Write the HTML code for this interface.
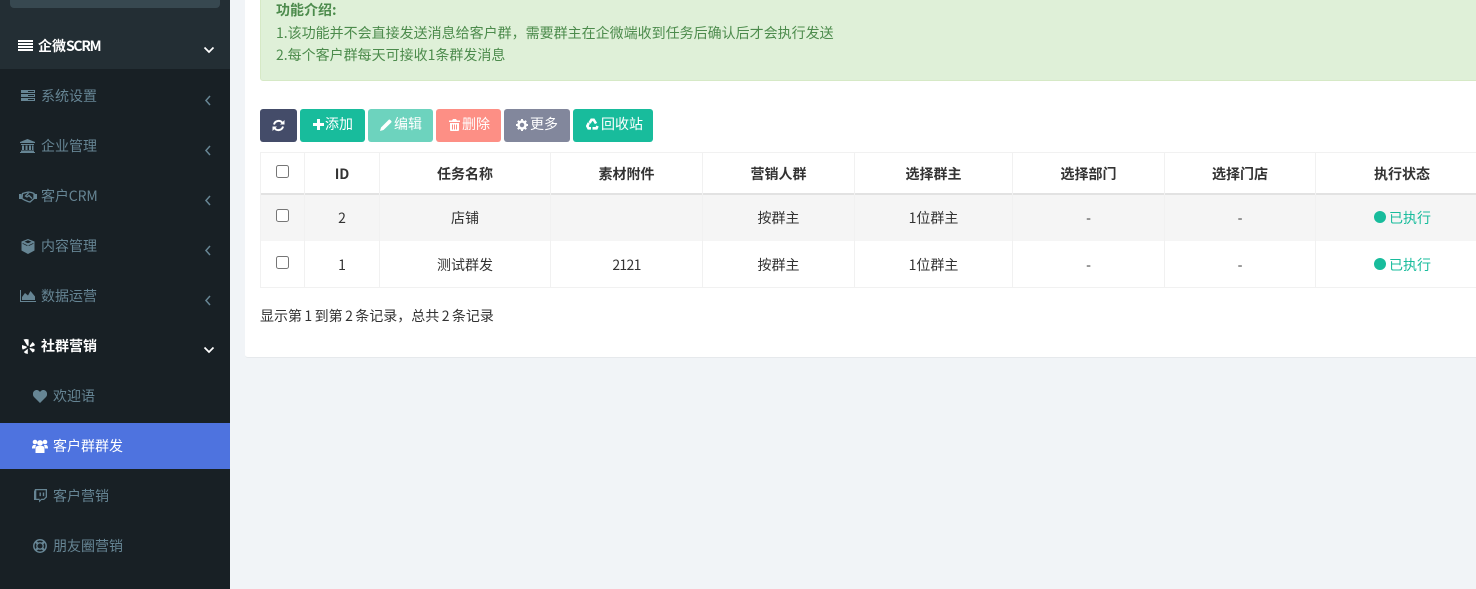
<!DOCTYPE html>
<html lang="zh-CN"><head><meta charset="utf-8"><title>客户群群发</title>
<style>
*{box-sizing:border-box}
html,body{margin:0;padding:0;width:1476px;height:589px;overflow:hidden;background:#f1f4f7;font-family:"Noto Sans CJK SC","Liberation Sans",sans-serif;font-size:14px;color:#333}
.a{position:absolute;white-space:nowrap}
#side{position:absolute;left:0;top:0;width:230px;height:589px;background:#182025}
#top{position:absolute;left:0;top:0;width:230px;height:69px;background:#232e34}
#search{position:absolute;left:10px;top:-10px;width:210px;height:18px;background:#374850;border-radius:4px}
.m{position:absolute;left:41px;font-size:14px;line-height:20px;color:#668594;white-space:nowrap}
.m.s{left:53px}
.m.w{color:#fff}
svg{position:absolute;display:block}
.chev{fill:none;stroke:#668594;stroke-width:1.5}
.chev.w{stroke:#fff;stroke-width:1.7}
#panel{position:absolute;left:245px;top:0;width:1231px;height:358px;background:#fff;border-bottom:1px solid #e6e9ec;border-bottom-left-radius:3px}
#alert{position:absolute;left:260px;top:-10px;width:1240px;height:91px;background:#dff0d8;border:1px solid #d6e9c6;border-radius:3px}
.al{position:absolute;left:276px;font-size:14px;line-height:20px;color:#4c8b4c;white-space:nowrap}
.b{position:absolute;top:109px;height:33px;border-radius:3px;color:#fff;font-size:14px;line-height:31px;white-space:nowrap}
.b span{position:absolute;top:0}
.hl{position:absolute;background:#f2f2f2}
.t{position:absolute;text-align:center;line-height:20px;white-space:nowrap;font-size:14px;color:#333}
.t.h{font-weight:700;top:164px}
.cb{position:absolute;left:276px;width:13px;height:13px;border:1px solid #767676;border-radius:2.5px;background:#fff}
</style></head><body>
<div id="side">
<div id="top"></div>
<div id="search"></div>

<svg style="left:18px;top:40px" width="15" height="11" viewBox="0 0 15 11"><path fill="#fff" d="M0 0h15v2H0zM0 3h15v2H0zM0 6h15v2H0zM0 9h15v2H0z"/></svg>
<div class="m w" style="left:38px;top:36px;font-weight:700">企微<span style="letter-spacing:-1.3px">SCRM</span></div>
<svg style="left:203px;top:46px" width="12" height="9"><path class="chev w" d="M1.500 1.500L6 6l4.500-4.500"/></svg>

<svg style="left:21px;top:90px" width="14" height="11" viewBox="0 0 14 11"><path fill="#668594" d="M0 0h14v3H0zM0 4h14v3H0zM0 8h14v3H0z"/><path fill="#182025" d="M7 1h6v1H7zM7 5h6v1H7zM7 9h6v1H7z"/></svg>
<div class="m" style="top:86px">系统设置</div>
<svg style="left:204px;top:95px" width="8" height="11"><path class="chev" d="M6 1L2 5.500 6 10"/></svg>

<svg style="left:20px;top:139px" width="15" height="14" viewBox="0 0 15 14"><path fill="#668594" d="M7.500 0L15 3v1H0V3zM1 5h13v1H1zM2 6.500h2V11H2zM5.500 6.500h2V11h-2zM9 6.500h2V11H9zM12 6.500h1.500V11H12zM1 11.500h13V13H1zM0 13h15v1H0z"/></svg>
<div class="m" style="top:136px">企业管理</div>
<svg style="left:204px;top:145px" width="8" height="11"><path class="chev" d="M6 1L2 5.500 6 10"/></svg>

<svg style="left:19px;top:191px" width="18" height="12" viewBox="0 0 18 12"><path fill="none" stroke="#668594" stroke-width="1.300" d="M3.500 2.500L7 1.500 9.500 1l3 .5 2.500 1v5L11 11 9 10.500 5.500 9 3 7.500zM9.500 2L6.500 5 8 6 10 4.500 13 7.500"/><path fill="#668594" d="M0 3h2.500v5H0zM15.500 3H18v5h-2.500z"/></svg>
<div class="m" style="top:186px;letter-spacing:-.1px">客户CRM</div>
<svg style="left:204px;top:195px" width="8" height="11"><path class="chev" d="M6 1L2 5.500 6 10"/></svg>

<svg style="left:21px;top:239px" width="14" height="15" viewBox="0 0 14 15"><path fill="#668594" d="M7 0l6.500 2.500v9L7 15 .500 11.500v-9z"/><path fill="#182025" d="M7.600 6.300l4.800-2.300v.8L7.600 7.100zM6.400 6.300L1.600 4v.8l4.800 2.300zM7 1.300L10.500 2.700 7 4.200 3.500 2.700z"/></svg>
<div class="m" style="top:236px">内容管理</div>
<svg style="left:204px;top:245px" width="8" height="11"><path class="chev" d="M6 1L2 5.500 6 10"/></svg>

<svg style="left:20px;top:290px" width="16" height="12" viewBox="0 0 16 12"><path fill="#668594" d="M0 0h1v11h15v1H0zM2 10V7l3-4 3 2.500L10.500 1 15 6.500V10z"/></svg>
<div class="m" style="top:286px">数据运营</div>
<svg style="left:204px;top:295px" width="8" height="11"><path class="chev" d="M6 1L2 5.500 6 10"/></svg>

<svg style="left:22px;top:339px" width="13" height="15" viewBox="0 0 13 15"><path fill="#fff" d="M1.500 .5L4 0l2.600 .4v6.300H5.300zM0 6l4.600 1.500v1.400L.7 10.600 0 9zM7.700 6.800l3-3.800 2 2.300v1.200L8 8.200zM7.700 9l4.800 1v2.300l-1.800 1.200-3-3.400zM5.800 9.800V15l-2.700-.7-1.300-1.300z"/></svg>
<div class="m w" style="top:336px;font-weight:700">社群营销</div>
<svg style="left:203px;top:346px" width="12" height="9"><path class="chev w" d="M1.500 1.500L6 6l4.500-4.500"/></svg>

<svg style="left:33px;top:390px" width="14" height="13" viewBox="0 0 14 13"><path fill="#668594" d="M7 13L1 7C-1.500 4 .5 0 3.700 0 5.200 0 6.300 1 7 2 7.700 1 8.800 0 10.300 0 13.500 0 15.500 4 13 7z"/></svg>
<div class="m s" style="top:386px">欢迎语</div>

<div style="position:absolute;left:0;top:423px;width:230px;height:46px;background:#4e73df"></div>
<svg style="left:32px;top:439px" width="16" height="14" viewBox="0 0 16 14"><g fill="#fff"><circle cx="3" cy="3" r="2.300"/><circle cx="13" cy="3" r="2.300"/><circle cx="8" cy="4" r="2.900"/><path d="M0 9.500c0-2.500.8-3.500 2-3.500h2L3 9.500zM16 9.500c0-2.500-.8-3.500-2-3.500h-2l1 3.500zM3.500 14V9.500C3.500 8 4.500 7 6 7h4c1.500 0 2.500 1 2.500 2.500V14z"/></g></svg>
<div class="m s w" style="top:436px">客户群群发</div>

<svg style="left:34px;top:489px" width="13" height="14" viewBox="0 0 13 14"><path fill="#668594" fill-rule="evenodd" d="M1 0h12v8.200l-3 2.800H7.500L5 13.500V11H0V2.500zM2.300 1.300v8.400h3.400v1.600l1.600-1.600h2.400l2-1.900V1.300z"/><path fill="#668594" d="M5.500 3.500h1.400v3.600H5.500zM8.800 3.500h1.400v3.600H8.800z"/></svg>
<div class="m s" style="top:486px">客户营销</div>

<svg style="left:33px;top:539px" width="14" height="14" viewBox="0 0 14 14"><circle cx="7" cy="7" r="6.200" fill="none" stroke="#668594" stroke-width="1.500"/><circle cx="7" cy="7" r="3.200" fill="none" stroke="#668594" stroke-width="1.300"/><path stroke="#668594" stroke-width="2.200" d="M2.800 2.800l2 2M11.200 2.800l-2 2M2.800 11.200l2-2M11.200 11.200l-2-2"/></svg>
<div class="m s" style="top:536px">朋友圈营销</div>
</div>

<div id="panel"></div>
<div id="alert"></div>
<div class="al" style="top:0;font-weight:700">功能介绍:</div>
<div class="al" style="top:23px">1.该功能并不会直接发送消息给客户群，需要群主在企微端收到任务后确认后才会执行发送</div>
<div class="al" style="top:45px">2.每个客户群每天可接收1条群发消息</div>

<div class="b" style="left:260px;width:37px;background:#444c69"><svg style="left:12px;top:10px" width="13" height="13" viewBox="0 0 13 13"><path fill="none" stroke="#fff" stroke-width="2" d="M2 5.500A4.700 4.700 0 0 1 10.500 4M11 7.500A4.700 4.700 0 0 1 2.500 9"/><path fill="#fff" d="M12.500 1v4.500H8zM.5 12V7.500H5z"/></svg></div>
<div class="b" style="left:300px;width:65px;background:#18bc9c"><svg style="left:13px;top:10px" width="11" height="11" viewBox="0 0 11 11"><path fill="#fff" d="M4 0h3v4h4v3H7v4H4V7H0V4h4z"/></svg><span style="left:25px">添加</span></div>
<div class="b" style="left:368px;width:65px;background:#6dd3be"><svg style="left:12px;top:10px" width="12" height="12" viewBox="0 0 12 12"><path fill="#fff" d="M0 12l1-3.500L8.500 1c.6-.6 1.200-.6 1.800 0l.8.800c.6.600.6 1.200 0 1.800L3.500 11z"/></svg><span style="left:26px">编辑</span></div>
<div class="b" style="left:436px;width:65px;background:#fd8f85"><svg style="left:13px;top:10px" width="11" height="12" viewBox="0 0 11 12"><path fill="#fff" fill-rule="evenodd" d="M4 0h3l1 1.500h3V3H0V1.500h3zM1 4h9v7c0 .6-.4 1-1 1H2c-.6 0-1-.4-1-1zM3 5.500v5h1v-5zM5 5.500v5h1v-5zM7 5.500v5h1v-5z"/></svg><span style="left:26px">删除</span></div>
<div class="b" style="left:504px;width:66px;background:#82879c"><svg style="left:12px;top:10px" width="12" height="12" viewBox="0 0 12 12"><circle cx="6" cy="6" r="3.500" fill="none" stroke="#fff" stroke-width="2.500"/><path stroke="#fff" stroke-width="2" d="M6 0v2M6 10v2M0 6h2M10 6h2M1.800 1.800l1.400 1.400M8.800 8.800l1.400 1.400M1.800 10.200l1.400-1.400M8.800 3.200l1.400-1.400"/></svg><span style="left:26px">更多</span></div>
<div class="b" style="left:573px;width:80px;background:#18bc9c"><svg style="left:13px;top:9px" width="13" height="13" viewBox="0 0 13 13"><path fill="none" stroke="#fff" stroke-width="2.600" d="M3.500 5L5.500 1.800h2.200L10 5.500M11.500 8l-1 2.300H6.500M5 10.300H2.500L1.300 8l1.500-3"/></svg><span style="left:28px">回收站</span></div>

<div class="hl" style="left:260px;top:194px;width:1216px;height:47px;background:#f5f5f5"></div>
<div class="hl" style="left:260px;top:152px;width:1216px;height:1px;background:#f1f1f1"></div>
<div class="hl" style="left:260px;top:193px;width:1216px;height:2px;background:#e2e2e2"></div>
<div class="hl" style="left:260px;top:287px;width:1216px;height:1px;background:#f1f1f1"></div>
<div class="hl" style="left:260px;top:152px;width:1px;height:136px;background:#f1f1f1"></div>
<div class="hl" style="left:304px;top:152px;width:1px;height:136px;background:#f1f1f1"></div>
<div class="hl" style="left:379px;top:152px;width:1px;height:136px;background:#f1f1f1"></div>
<div class="hl" style="left:550px;top:152px;width:1px;height:136px;background:#f1f1f1"></div>
<div class="hl" style="left:702px;top:152px;width:1px;height:136px;background:#f1f1f1"></div>
<div class="hl" style="left:854px;top:152px;width:1px;height:136px;background:#f1f1f1"></div>
<div class="hl" style="left:1012px;top:152px;width:1px;height:136px;background:#f1f1f1"></div>
<div class="hl" style="left:1164px;top:152px;width:1px;height:136px;background:#f1f1f1"></div>
<div class="hl" style="left:1315px;top:152px;width:1px;height:136px;background:#f1f1f1"></div>

<div class="cb" style="top:165px"></div>
<div class="cb" style="top:209px"></div>
<div class="cb" style="top:256px"></div>

<div class="t h" style="left:305px;width:74px">ID</div>
<div class="t h" style="left:380px;width:170px">任务名称</div>
<div class="t h" style="left:551px;width:151px">素材附件</div>
<div class="t h" style="left:703px;width:151px">营销人群</div>
<div class="t h" style="left:855px;width:157px">选择群主</div>
<div class="t h" style="left:1013px;width:151px">选择部门</div>
<div class="t h" style="left:1165px;width:150px">选择门店</div>
<div class="t h" style="left:1316px;width:172px">执行状态</div>

<div class="t" style="left:305px;width:74px;top:208px">2</div>
<div class="t" style="left:380px;width:170px;top:208px">店铺</div>
<div class="t" style="left:703px;width:151px;top:208px">按群主</div>
<div class="t" style="left:855px;width:157px;top:208px">1位群主</div>
<div class="t" style="left:1013px;width:151px;top:208px">-</div>
<div class="t" style="left:1165px;width:150px;top:208px">-</div>
<svg style="left:1374px;top:211px" width="12" height="12"><circle cx="6" cy="6" r="6" fill="#18bc9c"/></svg>
<div class="t" style="left:1389px;top:208px;color:#18bc9c">已执行</div>

<div class="t" style="left:305px;width:74px;top:255px">1</div>
<div class="t" style="left:380px;width:170px;top:255px">测试群发</div>
<div class="t" style="left:551px;width:151px;top:255px;letter-spacing:-.7px">2121</div>
<div class="t" style="left:703px;width:151px;top:255px">按群主</div>
<div class="t" style="left:855px;width:157px;top:255px">1位群主</div>
<div class="t" style="left:1013px;width:151px;top:255px">-</div>
<div class="t" style="left:1165px;width:150px;top:255px">-</div>
<svg style="left:1374px;top:258px" width="12" height="12"><circle cx="6" cy="6" r="6" fill="#18bc9c"/></svg>
<div class="t" style="left:1389px;top:255px;color:#18bc9c">已执行</div>

<div class="a" style="left:260px;top:306px;line-height:20px;font-size:14px;word-spacing:-.7px">显示第 1 到第 2 条记录，总共 2 条记录</div>
</body></html>
